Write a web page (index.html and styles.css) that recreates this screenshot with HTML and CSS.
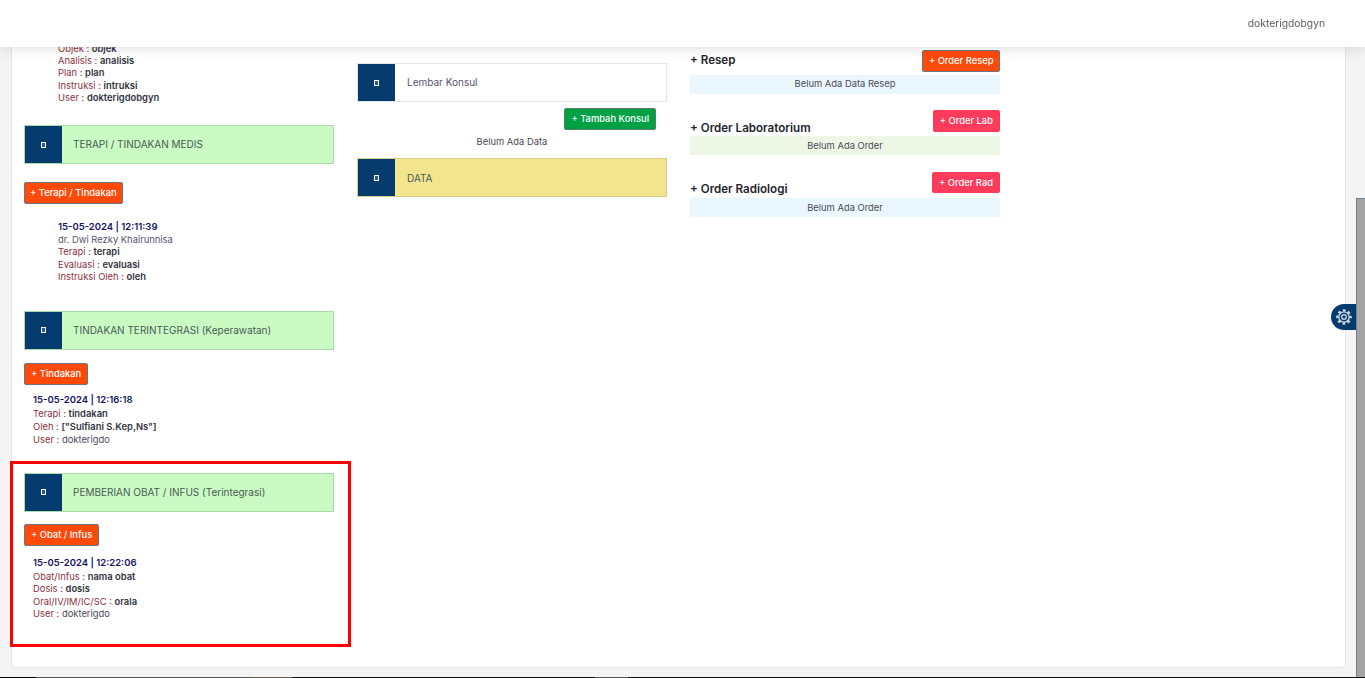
FILE: index.html
```html
<!DOCTYPE html>
<html>

<head>
  <title>Rekam Medis</title>
  <link rel="stylesheet" href="styles.css">
</head>

<body>
  <div class="topbar">
    <span class="user-name">dokterigdobgyn</span>
  </div>
  <div class="scroll-thumb"></div>
  <div class="settings-tab">
    <svg width="16" height="16" viewBox="0 0 24 24" fill="none" stroke="#d3dfea">
      <circle cx="12" cy="12" r="3.400" stroke-width="1.900"></circle>
      <circle cx="12" cy="12" r="7.800" stroke-width="2"></circle>
      <circle cx="12" cy="12" r="10" stroke-width="3.200" stroke-dasharray="3.930 3.930" stroke-dashoffset="1.960"></circle>
    </svg>
  </div>

  <div class="page-card">
    <div class="col col-left">
      <div class="entry entry-wide entry-top">
        <p><span class="lbl">Objek :</span> <b>objek</b></p>
        <p><span class="lbl">Analisis :</span> <b>analisis</b></p>
        <p><span class="lbl">Plan :</span> <b>plan</b></p>
        <p><span class="lbl">Instruksi :</span> <b>intruksi</b></p>
        <p><span class="lbl">User :</span> <b>dokterigdobgyn</b></p>
      </div>

      <div class="panel panel-green panel-terapi">
        <div class="panel-icon"><i></i></div>
        <div class="panel-title">TERAPI / TINDAKAN MEDIS</div>
      </div>
      <div class="btn-row btn-row-terapi"><a class="btn btn-orange btn-terapi">+ Terapi / Tindakan</a></div>
      <div class="entry entry-wide entry-terapi">
        <h6>15-05-2024 | 12:11:39</h6>
        <p class="plain">dr. Dwi Rezky Khairunnisa</p>
        <p><span class="lbl">Terapi :</span> <b>terapi</b></p>
        <p><span class="lbl">Evaluasi :</span> <b>evaluasi</b></p>
        <p><span class="lbl">Instruksi Oleh :</span> <b>oleh</b></p>
      </div>

      <div class="panel panel-green panel-tindakan">
        <div class="panel-icon"><i></i></div>
        <div class="panel-title">TINDAKAN TERINTEGRASI (Keperawatan)</div>
      </div>
      <div class="btn-row btn-row-tindakan"><a class="btn btn-orange">+ Tindakan</a></div>
      <div class="entry entry-tindakan">
        <h6>15-05-2024 | 12:16:18</h6>
        <p><span class="lbl">Terapi :</span> <b>tindakan</b></p>
        <p><span class="lbl">Oleh :</span> <b>["Sulfiani S.Kep,Ns"]</b></p>
        <p><span class="lbl">User :</span> dokterigdo</p>
      </div>

      <div class="highlight">
        <div class="panel panel-green">
          <div class="panel-icon"><i></i></div>
          <div class="panel-title">PEMBERIAN OBAT / INFUS (Terintegrasi)</div>
        </div>
        <div class="btn-row"><a class="btn btn-orange">+ Obat / Infus</a></div>
        <div class="entry entry-obat">
          <h6>15-05-2024 | 12:22:06</h6>
          <p><span class="lbl">Obat/Infus :</span> <b>nama obat</b></p>
          <p><span class="lbl">Dosis :</span> <b>dosis</b></p>
          <p><span class="lbl">Oral/IV/IM/IC/SC :</span> <b>orala</b></p>
          <p><span class="lbl">User :</span> dokterigdo</p>
        </div>
      </div>
    </div>

    <div class="col col-mid">
      <div class="panel panel-white">
        <div class="panel-icon"><i></i></div>
        <div class="panel-title">Lembar Konsul</div>
      </div>
      <div class="konsul-action"><a class="btn btn-green">+ Tambah Konsul</a></div>
      <div class="empty-text">Belum Ada Data</div>
      <div class="panel panel-yellow">
        <div class="panel-icon"><i></i></div>
        <div class="panel-title">DATA</div>
      </div>
    </div>

    <div class="col col-right">
      <div class="order order-resep">
        <div class="order-head">
          <h5>+ Resep</h5>
          <a class="btn btn-orange btn-resep">+ Order Resep</a>
        </div>
        <div class="notice notice-blue">Belum Ada Data Resep</div>
      </div>
      <div class="order order-lab">
        <div class="order-head">
          <h5>+ Order Laboratorium</h5>
          <a class="btn btn-pink">+ Order Lab</a>
        </div>
        <div class="notice notice-green">Belum Ada Order</div>
      </div>
      <div class="order order-rad">
        <div class="order-head">
          <h5>+ Order Radiologi</h5>
          <a class="btn btn-pink">+ Order Rad</a>
        </div>
        <div class="notice notice-blue">Belum Ada Order</div>
      </div>
    </div>
  </div>
  <div class="bottom-line"></div>
</body>

</html>
```

FILE: styles.css
```css
html,
body {
  height: 100%;
  overflow: hidden;
}

body {
  margin: 0;
  background-color: #f4f4f5;
  font-family: Inter, "Open Sans", sans-serif;
  font-size: 9.400px;
  line-height: 12.400px;
  color: #4a4a55;
}

p,
h5,
h6 {
  margin: 0;
}

.topbar {
  position: fixed;
  top: 0;
  left: 0;
  right: 0;
  height: 47px;
  z-index: 5;
  display: flex;
  justify-content: flex-end;
  align-items: center;
  padding-right: 40px;
  background-color: #fff;
  box-shadow: 0 2px 12px rgba(0, 0, 0, .12);
}

.user-name {
  font-size: 10.300px;
  color: #5b5b66;
}

.scroll-thumb {
  position: fixed;
  top: 198px;
  right: 0;
  bottom: 0;
  width: 8px;
  background-color: #a3a3a3;
  border-left: 1px solid #6e8494;
  border-top: 1px solid #6e8494;
}

.settings-tab {
  position: fixed;
  top: 304px;
  right: 9px;
  width: 25px;
  height: 26px;
  display: flex;
  align-items: center;
  justify-content: center;
  background-color: #063b6e;
  border-radius: 13px 0 0 13px;
}

.page-card {
  box-sizing: border-box;
  height: 668px;
  margin: 0 19px 0 11px;
  display: flex;
  background-color: #fff;
  border: 1px solid #e3e5ee;
  border-top: 0;
  border-radius: 0 0 4px 4px;
}

.col-left {
  width: 310px;
  margin-left: 12px;
  padding-top: 42.500px;
}

.col-mid {
  width: 310px;
  margin-left: 23px;
  padding-top: 63px;
}

.col-right {
  width: 310px;
  margin-left: 23px;
  padding-top: 50px;
}

.panel {
  box-sizing: border-box;
  height: 39px;
  display: flex;
  border: 1px solid #a9dcaa;
}

.panel-icon {
  width: 37px;
  display: flex;
  align-items: center;
  justify-content: center;
  background-color: #063b6e;
}

.panel-icon i {
  box-sizing: border-box;
  width: 5px;
  height: 6px;
  border: 1px solid #fff;
  background-color: #2a5a90;
}

.panel-title {
  display: flex;
  align-items: center;
  padding-left: 11px;
  font-size: 10px;
  color: #4a5a55;
}

.panel-green {
  background-color: #c9fbc3;
}

.panel-white {
  background-color: #fff;
  border-color: #e3e5ee;
}

.panel-white .panel-title {
  padding-left: 12px;
  color: #55556a;
}

.panel-yellow {
  background-color: #f3e58d;
  border-color: #d8cf85;
}

.panel-yellow .panel-title {
  padding-left: 12px;
}

.panel-terapi {
  margin-top: 20.500px;
}

.panel-tindakan {
  margin-top: 27px;
}

.btn-row {
  margin-top: 12px;
  display: flex;
}

.btn-row-terapi {
  margin-top: 18px;
}

.btn-row-tindakan {
  margin-top: 13px;
}

.btn {
  box-sizing: border-box;
  display: inline-block;
  height: 22px;
  padding: 0 6px;
  font-size: 9.400px;
  font-weight: 500;
  line-height: 20px;
  color: #fff;
  border-radius: 2px;
  white-space: nowrap;
}

.btn-terapi {
  padding: 0 5px;
}

.btn-resep {
  padding: 0 5.500px;
}

.btn-orange {
  background-color: #ff4a0a;
  border: 1px solid #6b7480;
}

.btn-green {
  background-color: #00a044;
  border: 1px solid #5c7a68;
}

.btn-pink {
  background-color: #ff3b5c;
  border: 1px solid #ff3b5c;
}

.entry {
  margin-top: 9px;
  margin-left: 9px;
}

.entry-wide {
  margin-left: 34px;
  margin-top: 15.500px;
}

.entry-top {
  margin-top: 0;
}

.entry-tindakan {
  margin-top: 8px;
  line-height: 12.700px;
}

.entry-obat {
  margin-top: 10px;
}

.entry h6 {
  font-size: 9.500px;
  line-height: 14px;
  font-weight: 600;
  color: #14145f;
  margin-bottom: 1px;
}

.entry-terapi h6 {
  margin-bottom: .5px;
}

.entry-tindakan h6 {
  margin-bottom: 1.700px;
}

.lbl {
  color: #8a2f3c;
}

.entry b {
  font-weight: 600;
  color: #33333d;
}

.plain {
  color: #55556a;
}

.highlight {
  box-sizing: border-box;
  width: 341px;
  height: 186px;
  margin: 14.400px 0 0 -14px;
  padding: 9px 0 0 11px;
  border: 3px solid #f00;
}

.highlight .panel {
  width: 310px;
}

.konsul-action {
  margin-top: 6px;
  padding-right: 11px;
  display: flex;
  justify-content: flex-end;
}

.empty-text {
  margin: 6px 0 10px;
  text-align: center;
}

.order-head {
  display: flex;
  justify-content: space-between;
  align-items: flex-end;
}

.order-head h5 {
  font-size: 11.600px;
  line-height: 14px;
  font-weight: 600;
  color: #24242c;
  margin-bottom: -3px;
}

.order-resep h5 {
  margin-bottom: 5px;
}

.order-resep .notice {
  line-height: 18px;
}

.order-lab {
  margin-top: 16px;
}

.order-lab .notice {
  margin-top: 4px;
}

.order-rad {
  margin-top: 17px;
}

.order-rad .btn {
  height: 21px;
}

.order-rad .notice {
  margin-top: 5px;
}

.notice {
  height: 19px;
  margin-top: 3px;
  text-align: center;
  line-height: 19px;
}

.notice-blue {
  background-color: #ebf7ff;
}

.notice-green {
  background-color: #eef7e6;
}

.bottom-line {
  position: fixed;
  left: 0;
  right: 0;
  bottom: 0;
  height: 1px;
  background: linear-gradient(to right, #000 36px, #555 36px, #555 250px, #6a5a50 250px, #6a5a50 292px, #111 292px, #111 595px, #555 595px, #555 628px, #111 628px);
}
```
